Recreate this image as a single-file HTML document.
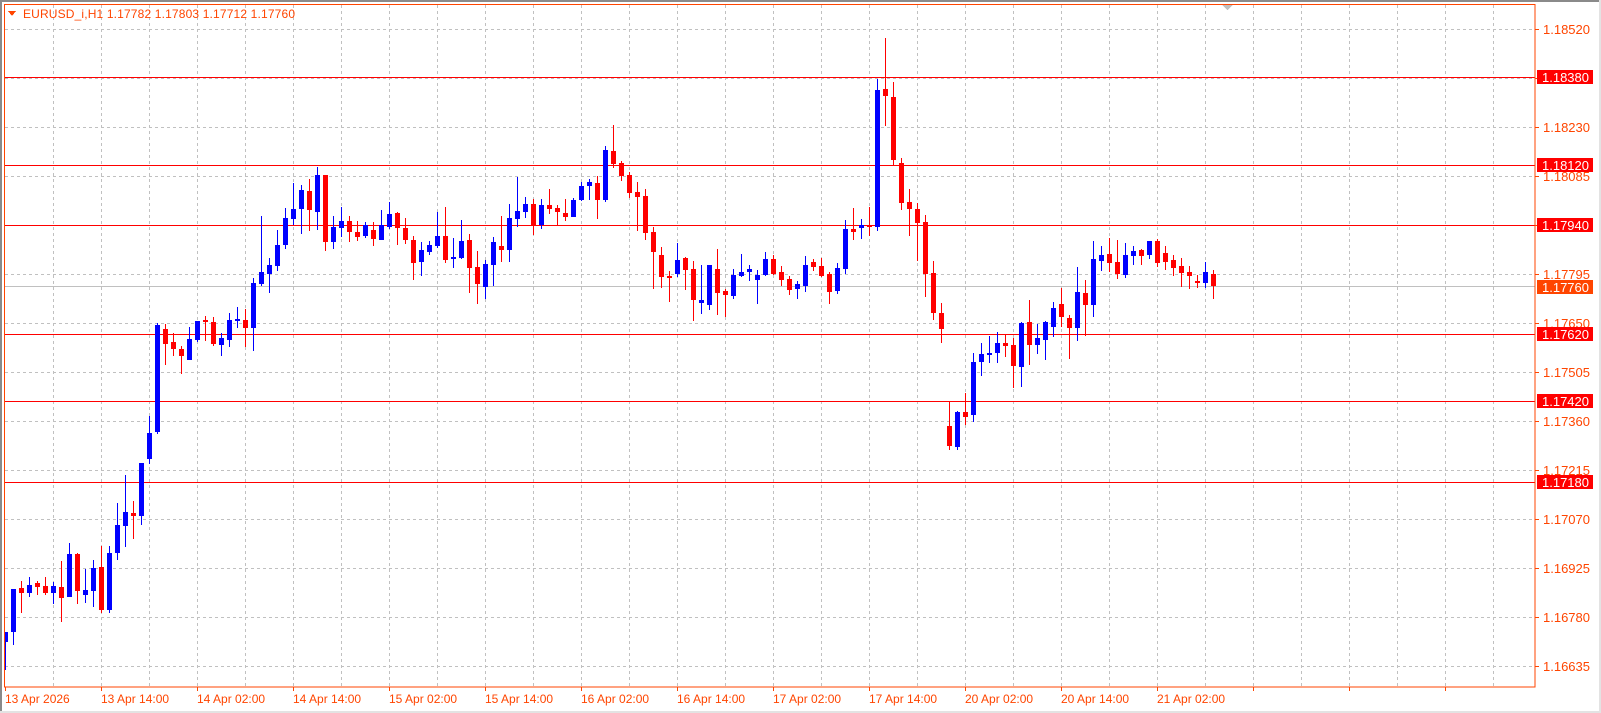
<!DOCTYPE html>
<html><head><meta charset="utf-8"><style>
html,body{margin:0;padding:0;background:#fff;}
svg{display:block;}
text{font-family:"Liberation Sans",sans-serif;}
</style></head><body>
<svg id="c" width="1601" height="713" viewBox="0 0 1601 713" xmlns="http://www.w3.org/2000/svg" shape-rendering="crispEdges">
<rect x="0" y="0" width="1601" height="713" fill="#fff"/>
<rect x="0" y="0" width="1601" height="2" fill="#8a8a8a"/>
<rect x="0" y="0" width="2" height="713" fill="#8a8a8a"/>
<rect x="0" y="711" width="1601" height="2" fill="#e3e3e3"/>
<rect x="1599" y="0" width="2" height="713" fill="#e3e3e3"/>
<g id="grid" stroke="#c0c0c0" stroke-width="1" stroke-dasharray="3,3"></g>
<g id="hl"></g>
<g id="cand"></g>
<rect x="4.5" y="4.5" width="1530.5" height="682.5" fill="none" stroke="#ff4500" stroke-width="1"/>
<polygon points="1222,5 1233,5 1227.5,10" fill="#c0c0c0"/>
<polygon points="8,11 16,11 12,16" fill="#ff4500"/>
<text x="23" y="18" font-size="12" fill="#ff4500" textLength="272" lengthAdjust="spacing">EURUSD_i,H1  1.17782 1.17803 1.17712 1.17760</text>
<g font-size="13" fill="#ff4500" id="pl">
<text x="1543" y="34">1.18520</text>
<text x="1543" y="132">1.18230</text>
<text x="1543" y="181">1.18085</text>
<text x="1543" y="279">1.17795</text>
<text x="1543" y="328">1.17650</text>
<text x="1543" y="377">1.17505</text>
<text x="1543" y="426">1.17360</text>
<text x="1543" y="475">1.17215</text>
<text x="1543" y="524">1.17070</text>
<text x="1543" y="573">1.16925</text>
<text x="1543" y="622">1.16780</text>
<text x="1543" y="671">1.16635</text>
</g>
<g id="tags"></g>
<g font-size="13" fill="#fff">
<rect x="1537" y="70" width="56" height="14" fill="#ff0000"/><text x="1542" y="82">1.18380</text>
<rect x="1537" y="158" width="56" height="14" fill="#ff0000"/><text x="1542" y="170">1.18120</text>
<rect x="1537" y="218" width="56" height="14" fill="#ff0000"/><text x="1542" y="230">1.17940</text>
<rect x="1537" y="280" width="56" height="14" fill="#ff4500"/><text x="1542" y="292">1.17760</text>
<rect x="1537" y="327" width="56" height="14" fill="#ff0000"/><text x="1542" y="339">1.17620</text>
<rect x="1537" y="394" width="56" height="14" fill="#ff0000"/><text x="1542" y="406">1.17420</text>
<rect x="1537" y="475" width="56" height="14" fill="#ff0000"/><text x="1542" y="487">1.17180</text>
</g>
<g font-size="12" fill="#ff4500">
<text x="5" y="703">13 Apr 2026</text>
<text x="101" y="703">13 Apr 14:00</text>
<text x="197" y="703">14 Apr 02:00</text>
<text x="293" y="703">14 Apr 14:00</text>
<text x="389" y="703">15 Apr 02:00</text>
<text x="485" y="703">15 Apr 14:00</text>
<text x="581" y="703">16 Apr 02:00</text>
<text x="677" y="703">16 Apr 14:00</text>
<text x="773" y="703">17 Apr 02:00</text>
<text x="869" y="703">17 Apr 14:00</text>
<text x="965" y="703">20 Apr 02:00</text>
<text x="1061" y="703">20 Apr 14:00</text>
<text x="1157" y="703">21 Apr 02:00</text>
</g>
</svg>
<script>
(function(){
var NS="http://www.w3.org/2000/svg";
function el(p,n,a){var e=document.createElementNS(NS,n);for(var k in a)e.setAttribute(k,a[k]);p.appendChild(e);return e;}
var g=document.getElementById('grid');
for(var x=53;x<1535;x+=48){el(g,'line',{x1:x+.5,y1:5,x2:x+.5,y2:687});}
for(var i=0;i<14;i++){var y=Math.round(29.3+49*i)+.5;el(g,'line',{x1:5,y1:y,x2:1535,y2:y});}
var tg=document.getElementById('tags');
for(var i=0;i<14;i++){var y=Math.round(29.3+49*i);el(tg,'rect',{x:1535,y:y,width:4,height:1,fill:'#ff4500'});}
for(var x=5;x<1535;x+=96){el(tg,'rect',{x:x,y:687,width:1,height:4,fill:'#ff4500'});}
var hl=document.getElementById('hl');
[[76.6,'#ff0000'],[164.5,'#ff0000'],[225.3,'#ff0000'],[286,'#c0c0c0'],[333.5,'#ff0000'],[401,'#ff0000'],[482,'#ff0000']].forEach(function(l){
 el(hl,'rect',{x:5,y:Math.round(l[0]),width:1530,height:1,fill:l[1]});});
var D=[
[0,632,670,632,642,'b'],[1,589,645,589,632,'b'],[2,581,613,588,593,'r'],[3,577,597,585,593,'b'],[4,581,595,583,587,'r'],
[5,577,595,586,593,'r'],[6,582,604,586,593,'b'],[7,561,622,587,598,'r'],[8,543,597,554,597,'b'],[9,553,604,554,591,'r'],
[10,569,603,590,595,'b'],[11,560,607,568,591,'b'],[12,546,613,567,610,'r'],[13,546,613,553,610,'b'],[14,503,560,525,553,'b'],
[15,475,547,512,526,'b'],[16,501,539,513,516,'r'],[17,463,525,463,516,'b'],[18,416,464,433,459,'b'],[19,323,434,325,432,'b'],
[20,324,365,329,344,'r'],[21,333,356,342,349,'r'],[22,346,374,349,356,'r'],[23,327,360,339,360,'b'],[24,321,342,321,340,'b'],
[25,316,341,320,322,'r'],[26,317,346,322,344,'r'],[27,333,356,338,345,'b'],[28,313,347,320,340,'b'],[29,307,328,319,321,'b'],
[30,309,347,320,328,'r'],[31,278,351,283,328,'b'],[32,216,286,272,284,'b'],[33,258,293,265,274,'b'],[34,230,271,245,266,'b'],
[35,208,249,218,245,'b'],[36,183,225,209,219,'b'],[37,185,234,190,209,'b'],[38,179,231,191,210,'r'],[39,167,230,175,212,'b'],
[40,175,251,175,242,'r'],[41,216,249,227,242,'b'],[42,207,237,221,228,'b'],[43,216,242,221,232,'r'],[44,221,241,232,237,'r'],
[45,222,238,225,236,'b'],[46,222,246,230,239,'r'],[47,210,240,225,240,'b'],[48,202,229,214,227,'b'],[49,212,245,213,228,'r'],
[50,218,244,228,240,'r'],[51,236,280,240,263,'r'],[52,242,276,250,262,'b'],[53,241,255,245,252,'b'],[54,212,248,236,246,'b'],
[55,207,263,236,260,'r'],[56,238,268,257,259,'b'],[57,220,259,241,258,'b'],[58,234,293,240,268,'r'],[59,251,304,267,284,'r'],
[60,260,299,264,287,'b'],[61,237,286,242,265,'b'],[62,216,262,246,250,'r'],[63,204,262,218,250,'b'],[64,177,227,211,219,'b'],
[65,197,218,204,212,'b'],[66,199,235,204,225,'r'],[67,199,229,205,225,'b'],[68,189,214,205,209,'r'],[69,205,225,208,212,'r'],
[70,199,221,213,217,'r'],[71,198,217,200,217,'b'],[72,182,201,186,200,'b'],[73,179,200,182,186,'b'],[74,176,219,183,200,'r'],
[75,146,202,150,200,'b'],[76,125,168,151,164,'r'],[77,161,181,163,176,'r'],[78,172,198,175,193,'r'],[79,182,231,192,197,'r'],
[80,189,240,196,233,'r'],[81,227,289,232,252,'r'],[82,247,288,255,277,'r'],[83,271,302,276,278,'r'],[84,243,277,260,274,'b'],
[85,257,290,258,270,'r'],[86,261,321,269,300,'r'],[87,265,314,300,303,'b'],[88,265,310,265,305,'b'],[89,249,315,269,293,'r'],
[90,289,317,291,295,'r'],[91,269,299,275,296,'b'],[92,254,277,272,276,'b'],[93,265,281,269,272,'b'],[94,270,304,275,280,'b'],
[95,252,276,259,275,'b'],[96,255,275,259,274,'r'],[97,266,286,272,280,'r'],[98,276,295,279,290,'r'],[99,281,299,284,289,'b'],
[100,256,292,265,286,'b'],[101,259,271,262,267,'r'],[102,258,277,266,276,'r'],[103,272,304,274,292,'r'],[104,263,294,268,291,'b'],
[105,220,274,229,269,'b'],[106,208,240,229,232,'r'],[107,219,239,225,228,'b'],[108,207,236,225,227,'r'],[109,79,231,90,227,'b'],
[110,38,126,89,96,'r'],[111,82,165,97,160,'r'],[112,158,210,163,203,'r'],[113,189,236,202,209,'r'],[114,203,261,209,223,'r'],
[115,215,297,222,274,'r'],[116,261,320,273,313,'r'],[117,303,343,313,329,'r'],[118,402,450,426,446,'r'],[119,411,450,412,447,'b'],
[120,393,425,412,417,'r'],[121,353,422,362,415,'b'],[122,343,376,354,362,'b'],[123,336,363,353,355,'b'],[124,332,363,343,353,'b'],
[125,335,357,343,346,'r'],[126,338,388,345,366,'r'],[127,322,387,323,367,'b'],[128,300,365,322,345,'r'],[129,324,354,338,345,'b'],
[130,321,360,322,340,'b'],[131,302,337,308,327,'b'],[132,288,327,304,317,'r'],[133,315,359,318,328,'r'],[134,267,341,292,328,'b'],
[135,280,336,293,305,'r'],[136,241,317,259,305,'b'],[137,246,271,255,261,'b'],[138,238,272,254,263,'r'],[139,240,279,262,274,'r'],
[140,243,278,255,275,'b'],[141,246,265,251,256,'b'],[142,249,265,250,256,'r'],[143,241,259,241,255,'b'],[144,239,267,241,263,'r'],
[145,246,270,253,262,'r'],[146,255,276,260,268,'r'],[147,258,287,266,273,'r'],[148,266,289,272,276,'r'],
[149,275,288,281,283,'r'],[150,262,288,272,283,'b'],[151,270,299,274,286,'r']];
var cg=document.getElementById('cand');
D.forEach(function(d){
 var k=d[0],col=d[5]=='r'?'#ff0000':'#0000ff';
 var wx=5+8*k,bx=3+8*k;
 el(cg,'rect',{x:wx,y:d[1],width:1,height:Math.max(1,d[2]-d[1]),fill:col});
 var bx0=Math.max(bx,5);
 el(cg,'rect',{x:bx0,y:d[3],width:bx+5-bx0,height:Math.max(2,d[4]-d[3]),fill:col});
});
})();
</script>
</body></html>
